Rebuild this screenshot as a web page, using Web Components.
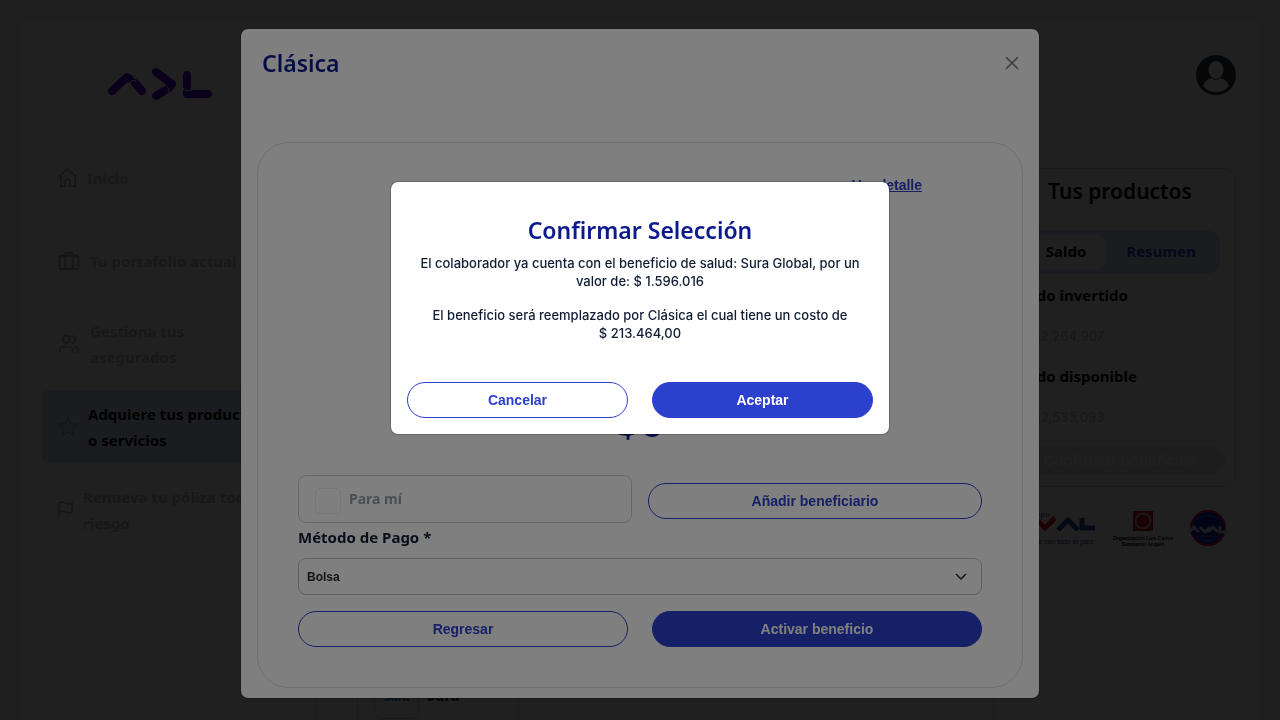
<!DOCTYPE html>
<html lang="es">
<head>
<meta charset="utf-8">
<meta name="viewport" content="width=device-width, initial-scale=1">
<title>Confirmar Selección</title>
<style>
  :root {
    --brand: #2c40ce;
    --navy: #0b1a8c;
    --ink: #0f1c33;
    --muted: #bcbec4;
    --tint: #d8e0fa;
    --heading: "Noto Sans", "Open Sans", sans-serif;
    --text: "Inter", "Noto Sans", sans-serif;
    --ui: "Liberation Sans", Arial, sans-serif;
  }
  body { margin: 0; background: #f4f4f4; font-family: var(--text); color: var(--ink); overflow: hidden; }
</style>
</head>
<body>
<benefits-page></benefits-page>
<modal-layer class="first">
  <benefit-dialog></benefit-dialog>
</modal-layer>
<modal-layer class="second" compact>
  <confirm-dialog></confirm-dialog>
</modal-layer>

<script>
const define = (name, html) => {
  const template = document.createElement('template');
  template.innerHTML = html;
  customElements.define(name, class extends HTMLElement {
    constructor() {
      super();
      this.attachShadow({ mode: 'open' }).append(template.content.cloneNode(true));
    }
  });
};

/* Pill button, outlined by default */
define('pill-button', `
<style>
  :host { display: block; }
  button { box-sizing: border-box; width: 100%; height: 36px; padding: 0 16px; border: 1px solid var(--brand);
    border-radius: 18px; background: transparent; color: var(--brand); font: bold 14px/18px var(--ui); cursor: pointer; }
  :host([primary]) button { background: var(--brand); color: #fff; }
</style>
<button type="button"><slot></slot></button>`);

/* Dimmed layer that holds a dialog */
define('modal-layer', `
<style>
  :host { position: fixed; inset: 0; box-sizing: border-box; display: flex; justify-content: center;
    align-items: flex-start; padding: 28px 16px; background: rgba(0,0,0,.75); }
  :host([compact]) { padding-top: 181px; background: rgba(0,0,0,.5); }
  .panel { box-sizing: border-box; width: 100%; max-width: 800px; border: 1px solid rgba(0,0,0,.18);
    border-radius: 8px; background: #fff; background-clip: padding-box; }
  :host([compact]) .panel { max-width: 500px; }
</style>
<div class="panel"><slot></slot></div>`);

define('nav-item', `
<style>
  :host { display: block; }
  a { box-sizing: border-box; min-height: 73px; display: flex; align-items: center; gap: 10px; padding: 0 0 0 16px;
    border-radius: 6px; color: var(--muted); text-decoration: none; font: bold 15px/26px var(--heading); }
  :host([active]) a { background: var(--tint); color: #000; }
  .icon { display: flex; flex: none; color: #b0b2b6; }
  .label { max-width: 182px; }
</style>
<a href="#"><span class="icon"><slot name="icon"></slot></span><span class="label"><slot></slot></span></a>`);

define('side-nav', `
<style>
  :host { display: block; padding: 46px 22px 0; }
  .logo { display: block; width: 108px; height: 36px; margin: 0 0 39px 64px; }
  nav { display: grid; gap: 10px; }
  nav svg { fill: none; stroke: currentColor; stroke-width: 2; stroke-linecap: round; stroke-linejoin: round; display: block; }
</style>
<svg class="logo" viewBox="0 0 108 36" fill="none" stroke="#5800e0" stroke-width="8" stroke-linecap="round" stroke-linejoin="round" role="img" aria-label="ADL">
  <path d="M6 25L21 11L24 13M29 17L36 25M50 6L66 18L62 23M58 25L50 30M81 9V20M82 28H102M81 25V28"/>
  <path d="M23 18Q25 13 30 15M61 21Q65 24 62 28M76 22Q80 26 86 24" stroke="#fff" stroke-width="1"/>
</svg>
<nav>
  <nav-item><svg slot="icon" width="19" height="20" viewBox="2 2 20 21"><path d="M3 11L12 3l9 8M5 9.500V21h4.500v-6a1 1 0 0 1 1-1h3a1 1 0 0 1 1 1v6H20V9.500"/></svg>Inicio</nav-item>
  <nav-item><svg slot="icon" width="22" height="18" viewBox="1 2 22 19"><rect x="2" y="6" width="20" height="14" rx="2"/><path d="M8 20V4.500a1.500 1.500 0 0 1 1.500-1.500h5A1.500 1.500 0 0 1 16 4.500V20"/></svg>Tu portafolio actual</nav-item>
  <nav-item><svg slot="icon" width="22" height="18" viewBox="1 2 22 20"><circle cx="9" cy="7" r="4"/><path d="M2 21v-2a4 4 0 0 1 4-4h6a4 4 0 0 1 4 4v2M16 3.130a4 4 0 0 1 0 7.750M22 21v-2a4 4 0 0 0-3-3.870"/></svg>Gestiona tus asegurados</nav-item>
  <nav-item active><svg slot="icon" width="20" height="20" viewBox="1 1 22 22"><path d="M12 2l3.090 6.260L22 9.270l-5 4.870 1.180 6.880L12 17.770l-6.180 3.250L7 14.140 2 9.270l6.910-1.010z"/></svg>Adquiere tus productos o servicios</nav-item>
  <nav-item><svg slot="icon" width="15" height="18" viewBox="3 2 18 21"><path d="M4 22V4s1-1 4-1 5 2 8 2 4-1 4-1v11s-1 1-4 1-5-2-8-2-4 1-4 1"/></svg>Renueva tu póliza todo riesgo</nav-item>
</nav>`);

define('balance-card', `
<style>
  :host { display: block; box-sizing: border-box; border: 1px solid #d8d8d8; border-radius: 12px; padding: 6px 10px 11px; background: #fff; }
  h2 { margin: 0 0 23px; text-align: center; font: 600 21px/32px var(--heading); color: #000; }
  .tabs { display: grid; grid-template-columns: 82px 1fr; margin: 0 5px; padding: 5px; border-radius: 14px; background: var(--tint); }
  .tabs button { height: 34px; padding: 0 0 2px; border: 0; border-radius: 12px; background: none; color: var(--brand); font: bold 15px/20px var(--heading); }
  .tabs button[aria-selected=true] { background: #fff; color: #000; }
  h3 { margin: 8px 0 10px; font: bold 15px/26px var(--heading); color: #000; }
  .amount { box-sizing: border-box; height: 37px; border: 1px solid #f2f2f2; border-radius: 18px; padding: 0 16px; color: #c4c4c4; font: 500 13px/35px var(--text); }
  .confirm { width: 100%; height: 29px; margin-top: 10px; border: 0; border-radius: 15px; background: #e2e2e2; color: #fff; font: 600 15px/20px var(--text); white-space: nowrap; padding: 0; display: block; }
</style>
<h2>Tus productos</h2>
<div class="tabs" role="tablist"><button role="tab" aria-selected="true">Saldo</button><button role="tab" aria-selected="false">Resumen</button></div>
<h3>Saldo invertido</h3><div class="amount">$2,264,907</div>
<h3>Saldo disponible</h3><div class="amount">$2,535,093</div>
<button class="confirm" type="button">Confirmar beneficios</button>`);

define('partner-logos', `
<style>
  :host { display: flex; justify-content: space-between; align-items: center; padding: 0 8px 0 6px; }
  svg { display: block; }
  text { font-family: var(--ui); }
</style>
<svg width="88" height="38" viewBox="0 0 88 38" role="img" aria-label="Grupo Aval">
  <text x="16" y="7" font-size="7" letter-spacing="1" fill="#203070">Grupo</text>
  <g fill="none" stroke-width="5" stroke-linejoin="round"><path d="M4 20l11-11 10 11M72 8v10h13" stroke="#2050a8"/><path d="M25 8l10 10L45 8" stroke="#e01010"/><path d="M48 20l10-10 10 10" stroke="#2050a8"/></g>
  <text x="6" y="34" font-size="7" fill="#204080">El grupo con todo el país</text>
</svg>
<svg width="60" height="38" viewBox="0 0 60 38" role="img" aria-label="Organización Luis Carlos Sarmiento Angulo">
  <path fill="#d00018" d="M20 1h20v20H20z"/><circle cx="30" cy="11" r="7.500" fill="none" stroke="#c8b8b8" stroke-width="2"/>
  <text x="30" y="30" font-size="5" font-weight="bold" text-anchor="middle" fill="#000">Organización Luis Carlos</text>
  <text x="30" y="36" font-size="5" font-weight="bold" text-anchor="middle" fill="#000">Sarmiento Angulo</text>
</svg>
<svg width="40" height="38" viewBox="0 0 40 38" role="img" aria-label="Aval">
  <circle cx="20" cy="18" r="17" fill="#1020a8" stroke="#d01038" stroke-width="2"/>
  <path d="M1 22l5-5 5 5M12 17l5 5 5-5M20 22l5-5 5 5M32 16v6h8" fill="none" stroke="#d0d8f0" stroke-width="3"/>
  <path d="M9 10q11-9 22 0M13 29q7 4 14 0M9 26h22" fill="none" stroke="#7080b0" stroke-dasharray="2 1"/>
</svg>`);

/* Page under the dialogs */
define('benefits-page', `
<style>
  :host { box-sizing: border-box; display: grid; grid-template-columns: 270px minmax(0, 1fr) 232px; column-gap: 10px;
    height: 100vh; padding: 20px 44px 0 20px; overflow: hidden;
    background: linear-gradient(#fff, #fff) 20px 20px / calc(100% - 40px) 100% no-repeat #f2f2f2; }
  main { display: flex; align-items: flex-end; padding: 0 0 0 16px; }
  .list { flex: 1; height: 60px; display: flex; padding-left: 40px; border: solid #dcdcdc; border-width: 0 1px; }
  .item { display: flex; gap: 8px; width: 144px; padding-left: 16px; border: solid #dcdcdc; border-width: 0 1px; font: bold 14px/20px var(--heading); color: #444; }
  .item b { padding-top: 26px; }
  .thumb { box-sizing: border-box; width: 45px; height: 59px; padding-top: 26px; border: 1px solid #d0d0d0; border-radius: 8px; text-align: center; color: #2080b0; font: bold 12px/20px var(--ui); }
  aside { display: flex; flex-direction: column; }
  .avatar { align-self: flex-end; margin: 35px 0 73px; width: 40px; height: 40px; padding: 0; border: 0; background: none; }
  .avatar svg { display: block; }
  partner-logos { margin-top: 23px; }
</style>
<side-nav></side-nav>
<main><div class="list"><div class="item"><span class="thumb">sura</span><b>Sura</b></div></div></main>
<aside>
  <button class="avatar" type="button" aria-label="Perfil"><svg width="40" height="40" viewBox="0 0 40 40"><circle cx="20" cy="20" r="20" fill="#2c3440"/><ellipse cx="20" cy="15" rx="7.500" ry="9" fill="#fff"/><path d="M7 31c2-6 6-7 8-8q5 4 10 0c2 1 6 2 8 8q-5 6-13 6T7 31z" fill="#fff"/></svg></button>
  <balance-card></balance-card>
  <partner-logos></partner-logos>
</aside>`);

define('benefit-dialog', `
<style>
  :host { display: block; padding: 16px 16px 10px; }
  header { display: flex; justify-content: space-between; align-items: center; height: 36px; padding: 0 4px 0 5px; margin-bottom: 61px; }
  h1 { margin: 0; font: 600 23px/32px var(--heading); color: var(--navy); }
  .close { width: 14px; height: 14px; padding: 0; border: 0; background: none; }
  .close svg { display: block; }
  form { border: 1px solid #dcdcdc; border-radius: 32px; padding: 32px 40px 40px; }
  .detail { display: flex; flex-direction: column; justify-content: space-between; height: 272px; margin-bottom: 28px; }
  .detail a { align-self: flex-end; margin-right: 60px; font: bold 14px/20px var(--ui); color: var(--brand); }
  .price { text-align: center; font: bold 42px/52px var(--heading); color: var(--navy); }
  .who { display: grid; grid-template-columns: 1fr 1fr; gap: 16px; align-items: end; }
  .who pill-button { margin-bottom: 4px; }
  .check { box-sizing: border-box; height: 48px; display: flex; align-items: center; gap: 8px; padding: 0 16px; border: 1px solid #cfcfcf; border-radius: 8px; color: #959aa4; font: bold 14px/24px var(--heading); }
  .check input { appearance: none; box-sizing: border-box; width: 26px; height: 26px; margin: 4px 0 0; border: 1px solid #ececec; border-radius: 5px; }
  .method { display: block; margin: 2px 0 9px; font: bold 15px/24px var(--heading); }
  .field { position: relative; }
  select { appearance: none; box-sizing: border-box; display: block; width: 100%; height: 37px; padding: 0 8px; border: 1px solid #bfbfbf; border-radius: 8px; background: transparent; color: #2a2a2a; font: bold 12px/16px var(--ui); }
  .field svg { position: absolute; right: 14px; top: 12px; pointer-events: none; }
  .actions { display: grid; grid-template-columns: 1fr 1fr; gap: 24px; margin-top: 16px; }
</style>
<header>
  <h1>Clásica</h1>
  <button class="close" type="button" aria-label="Cerrar"><svg width="14" height="14" viewBox="0 0 14 14" stroke="#777" stroke-width="1.500" stroke-linecap="round"><path d="M1.500 1.500l11 11M12.500 1.500l-11 11"/></svg></button>
</header>
<form>
  <div class="detail"><a href="#">Ver detalle</a><div class="price">$0</div></div>
  <div class="who">
    <label class="check"><input type="checkbox" disabled>Para mí</label>
    <pill-button>Añadir beneficiario</pill-button>
  </div>
  <label class="method" for="method">Método de Pago *</label>
  <div class="field">
    <select id="method"><option>Bolsa</option></select>
    <svg width="14" height="14" viewBox="0 0 14 14" fill="none" stroke="#333" stroke-width="1.600" stroke-linecap="round" stroke-linejoin="round"><path d="M2.500 4.500L7 9l4.500-4.500"/></svg>
  </div>
  <div class="actions"><pill-button>Regresar</pill-button><pill-button primary>Activar beneficio</pill-button></div>
</form>`);

define('confirm-dialog', `
<style>
  :host { display: block; padding: 32px 16px 16px; text-align: center; }
  h2 { margin: 0 0 8px; font: 600 23px/32px var(--heading); color: var(--navy); }
  p { margin: 0 12px 16px; font: 500 13px/18px var(--text); color: var(--ink); }
  .actions { display: grid; grid-template-columns: 1fr 1fr; gap: 24px; margin-top: 40px; }
</style>
<h2>Confirmar Selección</h2>
<p>El colaborador ya cuenta con el beneficio de salud: Sura Global, por un valor de: $&nbsp;1.596.016</p>
<p>El beneficio será reemplazado por Clásica el cual tiene un costo de $&nbsp;213.464,00</p>
<div class="actions"><pill-button>Cancelar</pill-button><pill-button primary>Aceptar</pill-button></div>`);
</script>
</body>
</html>
